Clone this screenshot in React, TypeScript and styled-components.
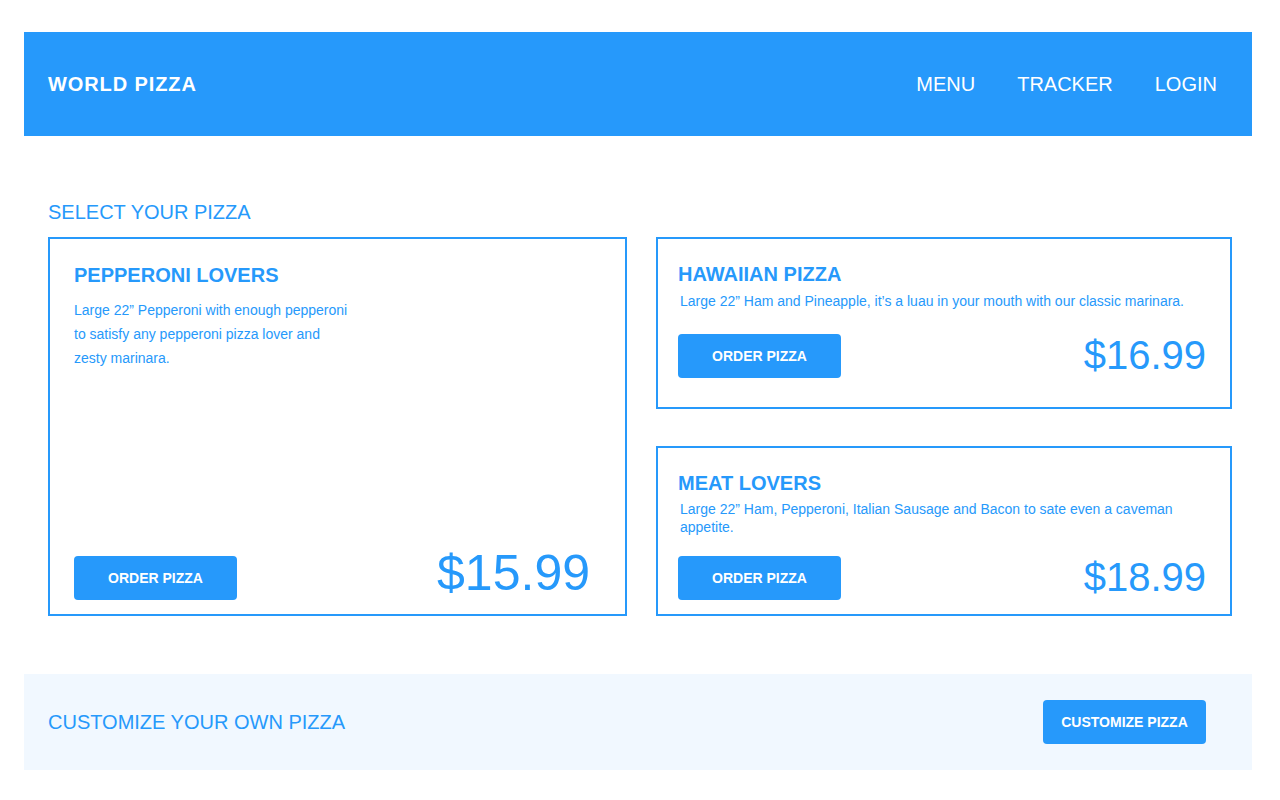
import React from "react";
import styled, { createGlobalStyle } from "styled-components";

const BLUE = "#2699FB";

const Global = createGlobalStyle`
  html, body { margin: 0; padding: 0; background: #ffffff; }
  body { font-family: "Liberation Sans", Arial, Helvetica, sans-serif; color: ${BLUE}; }
  * { box-sizing: border-box; }
`;

const Page = styled.div`
  width: 1280px;
  padding: 32px 0 30px;
`;

const Header = styled.header`
  margin: 0 28px 0 24px;
  height: 104px;
  background: ${BLUE};
  display: flex;
  align-items: center;
  justify-content: space-between;
  padding: 0 35px 0 24px;
`;

const Logo = styled.div`
  color: #fff;
  font-weight: 700;
  font-size: 20px;
  letter-spacing: 0.9px;
`;

const Nav = styled.nav`
  display: flex;
  gap: 42px;
`;

const NavLink = styled.a`
  color: #fff;
  font-size: 20px;
  text-decoration: none;
`;

const Main = styled.main`
  padding: 65px 48px 0 48px;
`;

const SectionTitle = styled.h2`
  margin: 0 0 14px;
  font-size: 20px;
  font-weight: 400;
  line-height: 22px;
`;

const Grid = styled.div`
  display: grid;
  grid-template-columns: 579px 576px;
  column-gap: 29px;
`;

const Column = styled.div`
  display: flex;
  flex-direction: column;
  gap: 37px;
`;

const Card = styled.div<{ $top: number; $bottom: number; $left: number; $right: number }>`
  border: 2px solid ${BLUE};
  display: flex;
  flex-direction: column;
  padding: ${(p) => `${p.$top}px ${p.$right}px ${p.$bottom}px ${p.$left}px`};
`;

const Title = styled.h3`
  margin: 0;
  font-size: 20px;
  font-weight: 700;
  line-height: 22px;
`;

const Desc = styled.p<{ $gap: number; $lh: number; $indent: number; $max?: number }>`
  margin: ${(p) => p.$gap}px 0 0;
  padding-left: ${(p) => p.$indent}px;
  font-size: 14px;
  line-height: ${(p) => p.$lh}px;
  max-width: ${(p) => (p.$max ? `${p.$max}px` : "none")};
`;

const Footer = styled.div<{ $gap?: number; $push?: boolean; $align?: string }>`
  display: flex;
  align-items: ${(p) => p.$align || "center"};
  justify-content: space-between;
  margin-top: ${(p) => (p.$push ? "auto" : `${p.$gap}px`)};
`;

const Button = styled.button`
  width: 163px;
  height: 44px;
  border: none;
  border-radius: 4px;
  background: ${BLUE};
  color: #fff;
  font-family: "Liberation Sans", Arial, sans-serif;
  font-size: 14px;
  font-weight: 700;
  cursor: pointer;
  padding: 0;
`;

const Price = styled.div<{ $size: number; $lift: number; $shift: number }>`
  font-size: ${(p) => p.$size}px;
  line-height: 1;
  margin-bottom: ${(p) => p.$lift}px;
  margin-right: ${(p) => p.$shift}px;
`;

const Band = styled.section`
  margin: 58px 28px 0 24px;
  height: 96px;
  background: #F1F8FF;
  display: flex;
  align-items: center;
  justify-content: space-between;
  padding: 0 46px 0 24px;
`;

const BandTitle = styled.h2`
  margin: 0;
  font-size: 20px;
  font-weight: 400;
`;

export default function App() {
  return (
    <>
      <Global />
      <Page>
        <Header>
          <Logo>WORLD PIZZA</Logo>
          <Nav>
            <NavLink href="#">MENU</NavLink>
            <NavLink href="#">TRACKER</NavLink>
            <NavLink href="#">LOGIN</NavLink>
          </Nav>
        </Header>
        <Main>
          <SectionTitle>SELECT YOUR PIZZA</SectionTitle>
          <Grid>
            <Card $top={25} $bottom={14} $left={24} $right={24}>
              <Title>PEPPERONI LOVERS</Title>
              <Desc $gap={12} $lh={24} $indent={0} $max={278}>
                Large 22” Pepperoni with enough pepperoni to satisfy any pepperoni pizza lover and zesty marinara.
              </Desc>
              <Footer $push $align="flex-end">
                <Button>ORDER PIZZA</Button>
                <Price $size={50} $lift={2} $shift={11}>$15.99</Price>
              </Footer>
            </Card>
            <Column>
              <Card $top={24} $bottom={29} $left={20} $right={24}>
                <Title>HAWAIIAN PIZZA</Title>
                <Desc $gap={7} $lh={18} $indent={2}>
                  Large 22” Ham and Pineapple, it’s a luau in your mouth with our classic marinara.
                </Desc>
                <Footer $gap={24}>
                  <Button>ORDER PIZZA</Button>
                  <Price $size={40} $lift={2} $shift={0}>$16.99</Price>
                </Footer>
              </Card>
              <Card $top={24} $bottom={14} $left={20} $right={24}>
                <Title>MEAT LOVERS</Title>
                <Desc $gap={6} $lh={18} $indent={2}>
                  Large 22” Ham, Pepperoni, Italian Sausage and Bacon to sate even a caveman appetite.
                </Desc>
                <Footer $gap={20}>
                  <Button>ORDER PIZZA</Button>
                  <Price $size={40} $lift={2} $shift={0}>$18.99</Price>
                </Footer>
              </Card>
            </Column>
          </Grid>
        </Main>
        <Band>
          <BandTitle>CUSTOMIZE YOUR OWN PIZZA</BandTitle>
          <Button>CUSTOMIZE PIZZA</Button>
        </Band>
      </Page>
    </>
  );
}
